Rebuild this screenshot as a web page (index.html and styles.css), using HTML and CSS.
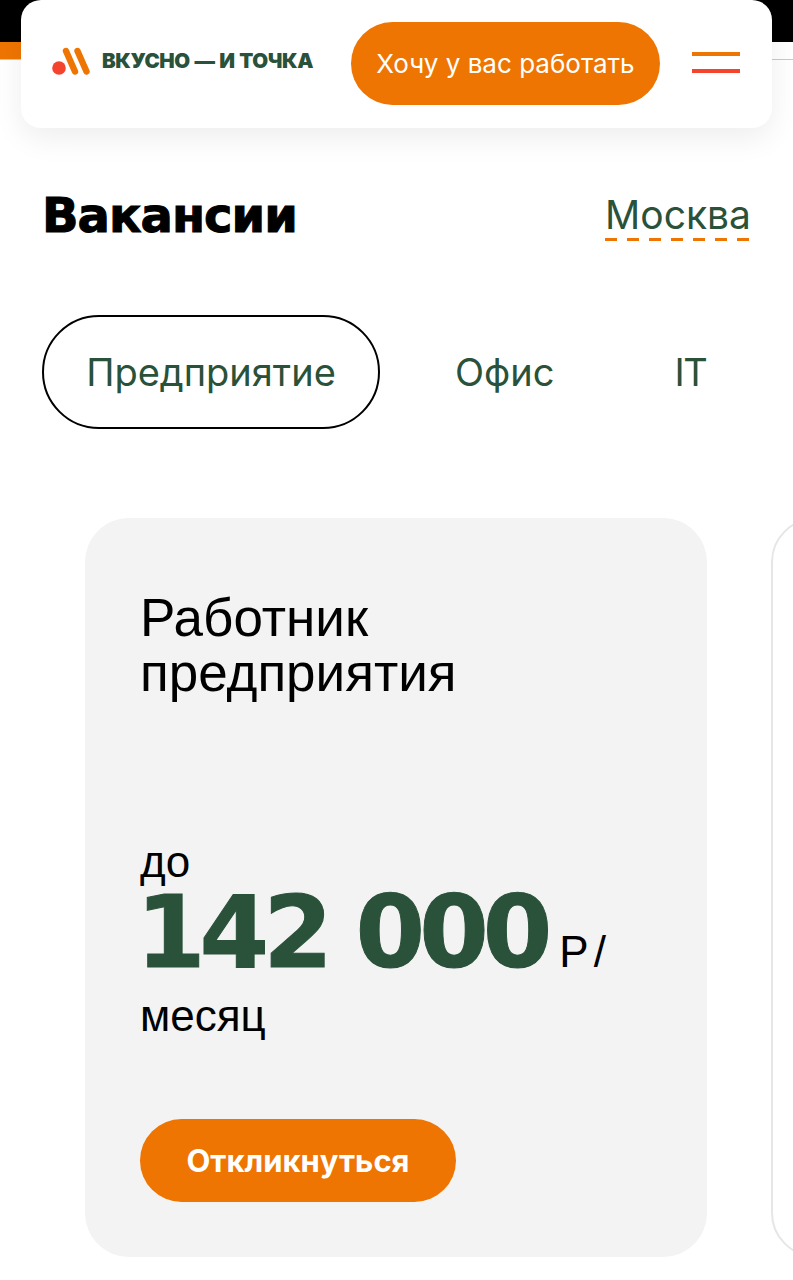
FILE: index.html
```html
<!DOCTYPE html>
<html lang="ru">
<head>
  <meta charset="UTF-8">
  <meta name="viewport" content="width=device-width, initial-scale=1.0">
  <title>Вакансии</title>
  <link rel="stylesheet" href="styles.css">
</head>
<body>
  <div class="topbar"></div>
  <div class="page">
    <header class="header">
      <a class="logo" href="#">
        <svg class="logo-mark" width="38" height="30" viewBox="0 0 38 30">
          <circle cx="7" cy="22" r="6.8" fill="#f4442e"/>
          <path d="M14 5 L23 25.5" stroke="#ef7502" stroke-width="6.4" stroke-linecap="round" fill="none"/>
          <path d="M25.5 5 L34.5 25.5" stroke="#ef7502" stroke-width="6.4" stroke-linecap="round" fill="none"/>
        </svg>
        <span class="logo-text">ВКУСНО — И ТОЧКА</span>
      </a>
      <button class="btn btn-header">Хочу у вас работать</button>
      <div class="burger"><span class="burger-top"></span><span class="burger-bottom"></span></div>
    </header>

    <div class="title-row">
      <h1>Вакансии</h1>
      <a class="city" href="#">Москва</a>
    </div>

    <nav class="tabs">
      <a class="tab tab-active" href="#">Предприятие</a>
      <a class="tab tab-office" href="#">Офис</a>
      <a class="tab tab-it" href="#">IT</a>
    </nav>

    <div class="cards">
      <section class="card">
        <h2>Работник<br>предприятия</h2>
        <div class="salary">
          <div class="salary-small">до</div>
          <div class="salary-line"><span class="salary-num">142 000</span> <span class="salary-unit">Р/</span></div>
          <div class="salary-small">месяц</div>
        </div>
        <button class="btn btn-card">Откликнуться</button>
      </section>
      <section class="card card-next"></section>
    </div>
  </div>
</body>
</html>
```

FILE: styles.css
```css
html, body {
  margin: 0;
  padding: 0;
  height: 1280px;
  background: #fff;
  font-family: 'Inter', 'Liberation Sans', sans-serif;
  overflow: hidden;
}
.topbar {
  height: 42px;
  background: #000;
  border-bottom: 17px solid #ef7502;
  box-shadow: 0 1px 0 #c9c9c9;
  position: absolute;
  top: 0;
  left: 0;
  right: 0;
  border-image: linear-gradient(to right, #ef7502 0 40px, #fff 40px) 1;
  box-sizing: content-box;
}
.page {
  position: relative;
}
.header {
  display: flex;
  align-items: center;
  height: 128px;
  margin: 0 21px;
  padding: 0 32px 0 31px;
  background: #fff;
  border-radius: 20px;
  box-shadow: 0 10px 30px rgba(0, 0, 0, 0.07);
  box-sizing: border-box;
}
.logo {
  display: flex;
  align-items: center;
  gap: 12px;
  text-decoration: none;
  width: 299px;
  margin-top: -7px;
}
.logo-text {
  font-family: 'Inter', sans-serif;
  font-weight: 900;
  font-size: 20.5px;
  letter-spacing: -0.4px;
  word-spacing: 1px;
  color: #2a5139;
  white-space: nowrap;
}
.btn {
  border: none;
  background: #ef7502;
  color: #fff;
  border-radius: 42px;
  height: 83px;
  font-family: 'Inter', sans-serif;
}
.btn-header {
  width: 309px;
  font-size: 26px;
  padding: 0;
  margin-top: -2px;
}
.burger {
  margin-left: 32px;
  margin-top: -3px;
  width: 48px;
}
.burger span {
  display: block;
  height: 4px;
}
.burger-top {
  background: #ef7502;
  margin-bottom: 13px;
}
.burger-bottom {
  background: #f4442e;
}
.title-row {
  display: flex;
  justify-content: space-between;
  align-items: flex-start;
  padding: 57px 42px 0 42px;
}
h1 {
  margin: 0;
  font-family: 'DejaVu Sans', sans-serif;
  font-weight: 700;
  font-size: 48px;
  line-height: 60px;
  letter-spacing: -1px;
  color: #000;
  -webkit-text-stroke: 1px #000;
}
.city {
  font-size: 39px;
  line-height: 46px;
  margin-top: 7px;
  padding-bottom: 3px;
  color: #2a5139;
  text-decoration: none;
  background: repeating-linear-gradient(to right, #ef7502 0 12px, transparent 12px 22px) left bottom / 100% 3px no-repeat;
}
.tabs {
  display: flex;
  align-items: center;
  margin: 70px 0 0 42px;
}
.tab {
  font-size: 38px;
  line-height: 44px;
  color: #2a5139;
  text-decoration: none;
}
.tab-active {
  display: flex;
  align-items: center;
  justify-content: center;
  width: 338px;
  height: 114px;
  box-sizing: border-box;
  border: 2px solid #000;
  border-radius: 57px;
}
.tab-office {
  margin-left: 75px;
}
.tab-it {
  margin-left: 120px;
  letter-spacing: -1.5px;
}
.cards {
  display: flex;
  gap: 64px;
  margin: 89px 0 0 85px;
  overflow: hidden;
}
.card {
  flex: none;
  width: 622px;
  height: 739px;
  background: #f3f3f3;
  border-radius: 44px;
  padding: 72px 55px 0;
  box-sizing: border-box;
}
.card-next {
  background: #fff;
  border: 2px solid #e6e6e6;
}
h2 {
  margin: 0;
  font-family: 'Liberation Sans', sans-serif;
  font-weight: 400;
  font-size: 53px;
  line-height: 55px;
  color: #000;
}
.salary {
  margin-top: 138px;
  font-family: 'Liberation Sans', sans-serif;
}
.salary-small {
  font-size: 44px;
  line-height: 47px;
  color: #000;
}
.salary-line {
  display: flex;
  align-items: baseline;
  gap: 13px;
  line-height: 60px;
  margin-top: 11px;
  margin-bottom: 10px;
}
.salary-num {
  font-family: 'DejaVu Sans', sans-serif;
  font-size: 100px;
  line-height: 74px;
  font-weight: 700;
  letter-spacing: -6px;
  margin-left: -4px;
  color: #2a5139;
  -webkit-text-stroke: 1px #2a5139;
}
.salary-unit {
  font-size: 44px;
  letter-spacing: 5px;
  color: #000;
}
.btn-card {
  display: block;
  margin-top: 80px;
  width: 316px;
  font-size: 31px;
  font-weight: 700;
}
```
